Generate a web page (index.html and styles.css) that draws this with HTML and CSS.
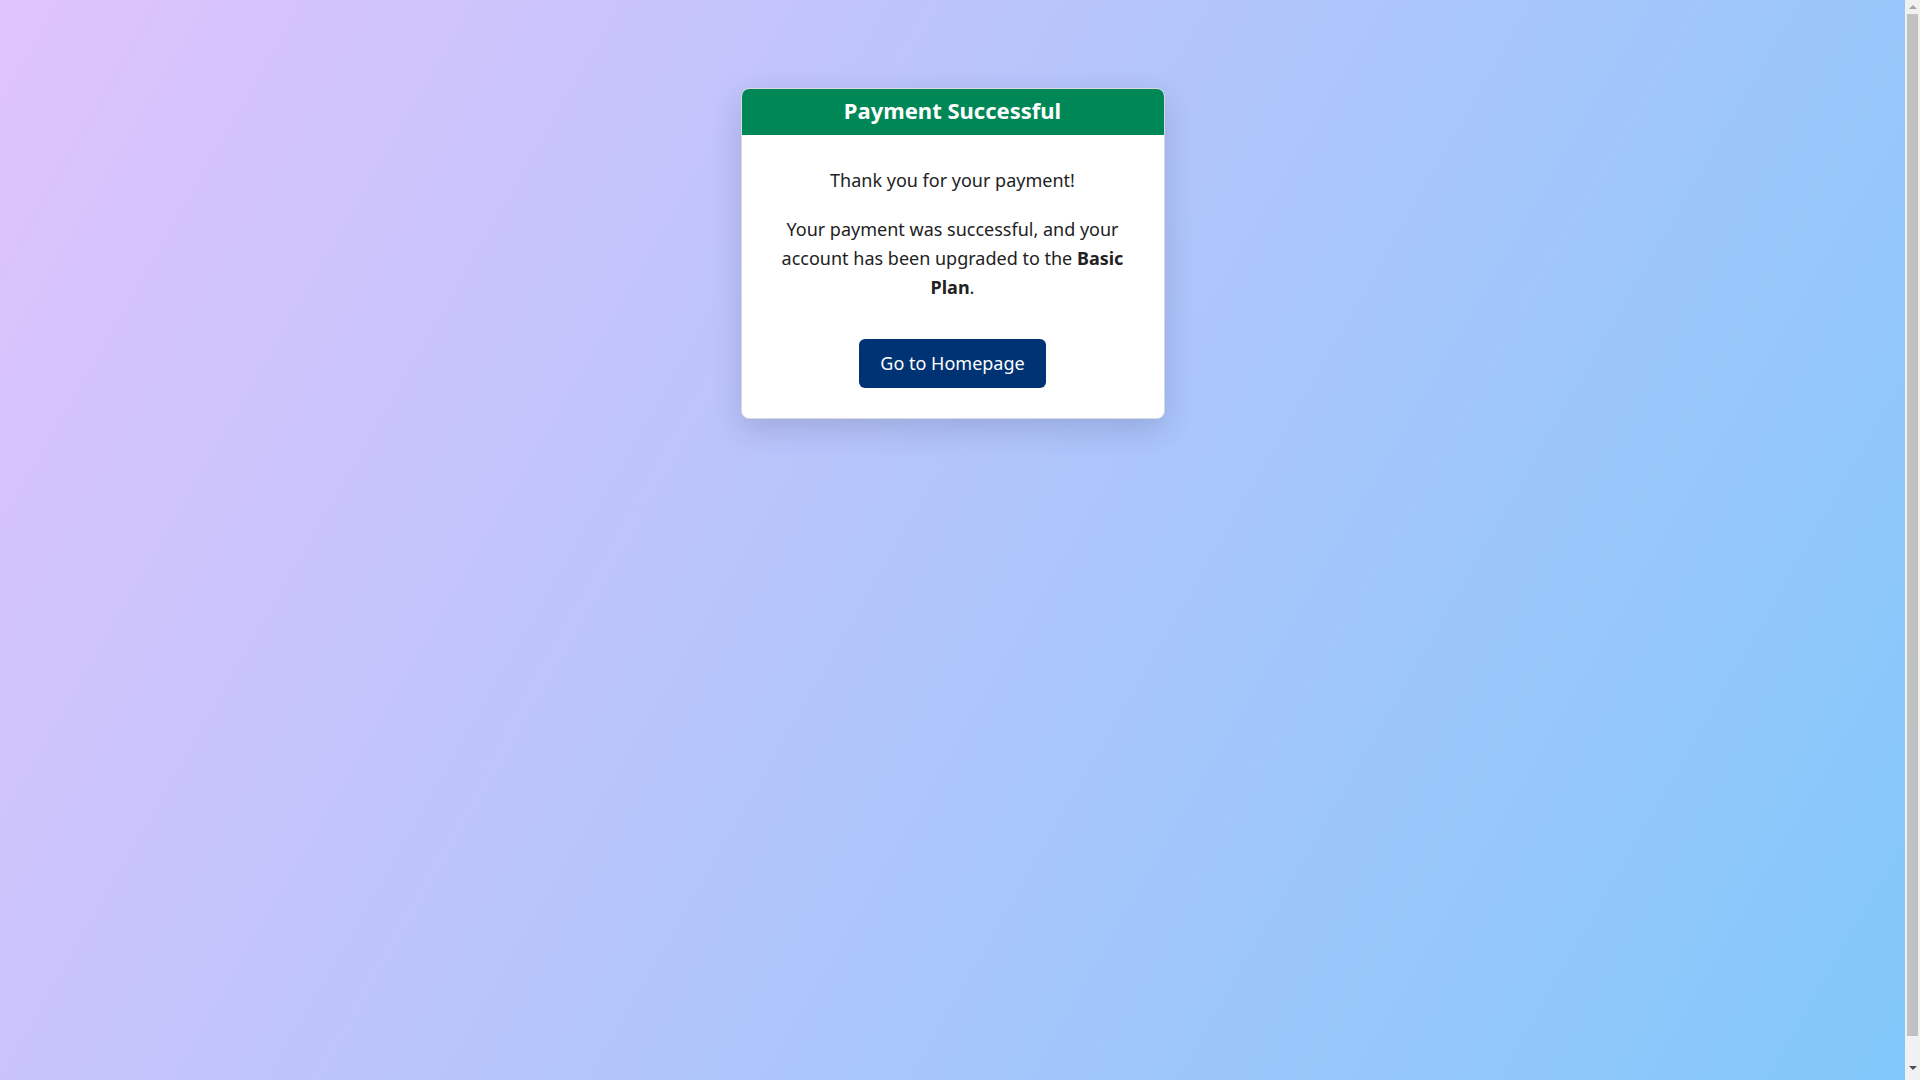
FILE: index.html
```html
<!DOCTYPE html>
<html lang="en">
<head>
<meta charset="utf-8">
<title>Payment Successful</title>
<link rel="stylesheet" href="styles.css">
</head>
<body>
  <main class="card">
    <header class="card-header">
      <h1 class="card-title">Payment Successful</h1>
    </header>
    <section class="card-body">
      <p class="lead">Thank you for your payment!</p>
      <p class="message">Your payment was successful, and your account has been upgraded to the <strong>Basic</strong> <strong>Plan</strong>.</p>
      <a class="btn" href="#">Go to Homepage</a>
    </section>
  </main>
  <div class="scrollbar" aria-hidden="true">
    <span class="arrow arrow-up"></span>
    <span class="thumb"></span>
    <span class="arrow arrow-down"></span>
  </div>
</body>
</html>
```
FILE: styles.css
```css
html {
  min-height: 100%;
  background: linear-gradient(120deg, #e0c3fc 0%, #80c8fa 100%);
}
body {
  margin: 0;
  padding: 24px 39px 24px 24px;
  min-height: 100vh;
  font-family: "Noto Sans", "DejaVu Sans", sans-serif;
  color: #222;
}
.card {
  width: 424px;
  margin: 64px auto 0;
  box-sizing: border-box;
  background: #fff;
  border: 1px solid #d8d8e0;
  border-radius: 8px;
  overflow: hidden;
  box-shadow: 0 10px 30px rgba(40, 40, 90, 0.18);
}
.card-header {
  background: #008756;
  height: 46px;
  box-sizing: border-box;
  padding-bottom: 5px;
  display: flex;
  align-items: center;
  justify-content: center;
}
.card-title {
  margin: 0;
  color: #fff;
  font-size: 22px;
  font-weight: 700;
}
.card-body {
  padding: 31px 32px 30px;
  display: flex;
  flex-direction: column;
  align-items: center;
  text-align: center;
}
.card-body p {
  margin: 0;
  font-size: 18px;
  line-height: 29px;
}
.card-body .message {
  margin-top: 20px;
}
.btn {
  margin-top: 37px;
  display: inline-block;
  padding: 12px 21px;
  line-height: 25px;
  font-size: 18px;
  background: #003373;
  color: #fff;
  text-decoration: none;
  border-radius: 6px;
}
.scrollbar {
  position: fixed;
  top: 0;
  right: 0;
  bottom: 0;
  width: 15px;
  background: #f1f1f1;
  display: flex;
  flex-direction: column;
  align-items: center;
}
.thumb {
  flex: 1;
  width: 11px;
  margin: 0 2px;
  background: #c1c1c1;
  margin-bottom: 44px;
}
.arrow {
  width: 0;
  height: 0;
  border-left: 4px solid transparent;
  border-right: 4px solid transparent;
  margin: 5px 0;
}
.arrow-up {
  border-bottom: 4px solid #a3a3a3;
}
.arrow-down {
  border-top: 4px solid #505050;
  position: absolute;
  bottom: 5px;
}
```
